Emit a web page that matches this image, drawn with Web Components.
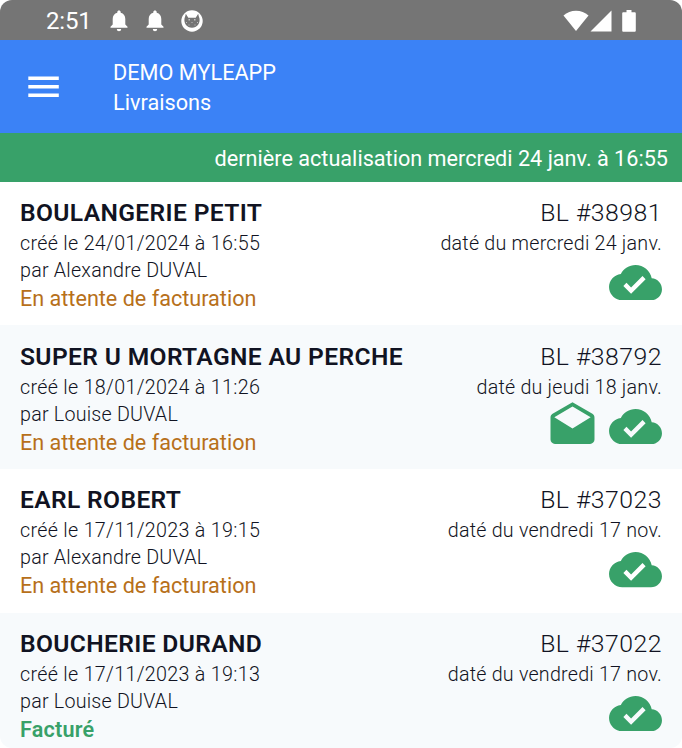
<!DOCTYPE html>
<html lang="fr">
<head>
<meta charset="utf-8">
<title>Livraisons</title>
<style>
body {
	margin:0;
	background:#fff;
	font-family:Roboto,"Liberation Sans",sans-serif;
}
</style>
</head>
<body>
<app-screen>
  <status-bar slot="top" time="2:51"></status-bar>
  <app-header slot="top">
    <span slot="title">DEMO MYLEAPP</span>
    <span slot="subtitle">Livraisons</span>
  </app-header>
  <sync-banner slot="top">dernière actualisation mercredi 24 janv. à 16:55</sync-banner>
  <delivery-list></delivery-list>
</app-screen>

<script>
const deliveries = [
  { client: 'BOULANGERIE PETIT', created: '24/01/2024 à 16:55', author: 'Alexandre DUVAL', status: 'En attente de facturation', number: '38981', date: 'mercredi 24 janv.' },
  { client: 'SUPER U MORTAGNE AU PERCHE', created: '18/01/2024 à 11:26', author: 'Louise DUVAL', status: 'En attente de facturation', number: '38792', date: 'jeudi 18 janv.', mailed: true },
  { client: 'EARL ROBERT', created: '17/11/2023 à 19:15', author: 'Alexandre DUVAL', status: 'En attente de facturation', number: '37023', date: 'vendredi 17 nov.' },
  { client: 'BOUCHERIE DURAND', created: '17/11/2023 à 19:13', author: 'Louise DUVAL', status: 'Facturé', billed: true, number: '37022', date: 'vendredi 17 nov.' },
];

class AppScreen extends HTMLElement {
  constructor() {
    super();
    this.attachShadow({ mode: 'open' }).innerHTML = `
      <style>
        :host {
          display:flex;
          flex-direction:column;
          width:682px;
          height:748px;
          overflow:hidden;
          border-radius:12px;
        }
      </style>
      <slot name="top"></slot>
      <slot></slot>
    `;
  }
}

// Barre système Android
class StatusBar extends HTMLElement {
  constructor() {
    super();
    this.attachShadow({ mode: 'open' });
  }

  connectedCallback() {
    const bell = `<svg class="bell" width="18" height="22" viewBox="0 0 18 22"><path d="M9 .5c1 0 1.7.7 1.7 1.7v.6c2.9.7 4.6 3.1 4.6 6.1v5.7l2.2 2.1v1.1H.5v-1.1l2.2-2.1V8.9c0-3 1.7-5.4 4.6-6.1v-.6C7.3 1.2 8 .5 9 .5zM6.8 19h4.4a2.2 2.2 0 0 1-4.4 0z"/></svg>`;
    this.shadowRoot.innerHTML = `
      <style>
        :host {
          display:flex;
          flex:none;
          justify-content:space-between;
          align-items:center;
          box-sizing:border-box;
          height:39.5px;
          padding:2px 46px 0 46px;
          background:#757575;
          color:#fff;
        }
        .left,.right {
          display:flex;
          align-items:center;
        }
        .time {
          width:64px;
          font-size:24px;
          line-height:28px;
          letter-spacing:-0.2px;
        }
        svg {
          display:block;
          fill:#fff;
        }
        .bell {
          margin-right:18.2px;
        }
        .bell + .bell {
          margin-right:16.8px;
        }
        .right svg + svg {
          margin-left:1.5px;
        }
        .right svg.battery {
          margin-left:10px;
        }
      </style>
      <div class="left">
        <span class="time">${this.getAttribute('time')}</span>
        ${bell}${bell}
        <svg width="22" height="22" viewBox="0 0 22 22">
          <circle cx="11" cy="11" r="10.7"/>
          <path fill="#757575" d="M4.8 3.8l2.5 3.9h7.4l2.5-3.9c.3 1.8.8 3 1.3 4.7.8 4.7-2.3 9.3-7.5 9.3S2.7 13.2 3.5 8.5c.5-1.7 1-2.9 1.3-4.7z"/>
          <path d="M7.5 9H9v1.5H7.5zM13 9h1.5v1.5H13zM5 12h1v1H5zM10.5 12h1v1h-1zM16 12h1v1h-1zM7.5 14.5h1v1h-1zM13.5 14.5h1v1h-1z" opacity=".55"/>
        </svg>
      </div>
      <div class="right">
        <svg width="26" height="22" viewBox="0 0 26 22"><path d="M.5 5.5a18.5 18.5 0 0 1 25 0L13 21z"/></svg>
        <svg width="22" height="22" viewBox="0 0 22 22"><path d="M21.5.5v21H.5z"/></svg>
        <svg class="battery" width="14" height="22" viewBox="0 0 14 22"><path d="M4.5 0h5v2.2h3c.8 0 1.3.5 1.3 1.3v17c0 .8-.5 1.3-1.3 1.3h-11C.7 21.8.2 21.3.2 20.5v-17c0-.8.5-1.3 1.3-1.3h3z"/></svg>
      </div>
    `;
  }
}

class AppHeader extends HTMLElement {
  constructor() {
    super();
    this.attachShadow({ mode: 'open' }).innerHTML = `
      <style>
        :host {
          display:flex;
          flex:none;
          align-items:center;
          box-sizing:border-box;
          height:93px;
          padding-left:28px;
          background:#3b82f6;
          color:#fff;
        }
        svg {
          display:block;
          width:85px;
          height:22px;
          margin-top:2px;
        }
        .titles {
          display:flex;
          flex-direction:column;
          padding-top:3px;
          font-size:21.7px;
          line-height:29.5px;
        }
      </style>
      <svg viewBox="0 0 85 22" fill="#fff"><path d="M.3.5h30.5v3.4H.3zM.3 9.1h30.5v3.4H.3zM.3 17.6h30.5V21H.3z"/></svg>
      <div class="titles">
        <slot name="title"></slot>
        <slot name="subtitle"></slot>
      </div>
    `;
  }
}

// Bandeau vert : date de la dernière synchro
class SyncBanner extends HTMLElement {
  constructor() {
    super();
    this.attachShadow({ mode: 'open' }).innerHTML = `
      <style>
        :host {
          display:flex;
          flex:none;
          justify-content:flex-end;
          align-items:center;
          box-sizing:border-box;
          height:49.3px;
          padding:2px 14px 0 0;
          background:#38a169;
          color:#fff;
          font-size:21.65px;
        }
      </style>
      <span><slot></slot></span>
    `;
  }
}

class DeliveryItem extends HTMLElement {
  constructor() {
    super();
    this.attachShadow({ mode: 'open' });
  }

  set delivery(d) {
    const mail = `<svg width="53" height="44" viewBox="0 0 24 20"><path d="M21.99 8c0-.72-.37-1.35-.94-1.7L12 1 2.95 6.3C2.38 6.65 2 7.28 2 8v10c0 1.1.9 2 2 2h16c1.1 0 2-.9 2-2l-.01-10zM12 13L3.74 7.84 12 3l8.26 4.84L12 13z"/></svg>`;
    const cloud = `<svg width="53" height="35.3" viewBox="0 4 24 16"><path d="M19.35 10.04C18.67 6.59 15.64 4 12 4 9.11 4 6.6 5.64 5.35 8.04 2.34 8.36 0 10.91 0 14c0 3.31 2.69 6 6 6h13c2.76 0 5-2.24 5-5 0-2.64-2.05-4.78-4.65-4.96zM10 17l-3.5-3.5 1.41-1.41L10 14.17 15.18 9l1.41 1.41L10 17z"/></svg>`;
    this.shadowRoot.innerHTML = `
      <style>
        :host {
          display:flex;
          justify-content:space-between;
          box-sizing:border-box;
          height:143.6px;
          padding:15.5px 20px 0;
          color:#111322;
          font-weight:300;
        }
        .col {
          display:flex;
          flex-direction:column;
          white-space:nowrap;
        }
        .end {
          align-items:flex-end;
        }
        .client,.number {
          font-size:24.6px;
          line-height:32px;
          margin-bottom:0.7px;
        }
        .client {
          font-weight:600;
          letter-spacing:0.36px;
        }
        .number {
          font-size:24.8px;
          letter-spacing:0.48px;
        }
        .line {
          font-size:19.7px;
          line-height:27.1px;
          font-weight:350;
          letter-spacing:0.22px;
        }
        .created {
          letter-spacing:0.31px;
        }
        .status {
          font-size:21.6px;
          line-height:29.5px;
          font-weight:400;
          color:#b7701a;
        }
        .status.billed {
          font-weight:600;
          letter-spacing:0.2px;
          color:#38a169;
        }
        .icons {
          display:flex;
          align-items:flex-end;
          gap:10.5px;
          height:44px;
          margin-top:-0.6px;
          fill:#38a169;
        }
        svg {
          display:block;
        }
      </style>
      <div class="col">
        <span class="client">${d.client}</span>
        <span class="line created">créé le ${d.created}</span>
        <span class="line">par ${d.author}</span>
        <span class="status ${d.billed ? 'billed' : ''}">${d.status}</span>
      </div>
      <div class="col end">
        <span class="number">BL #${d.number}</span>
        <span class="line">daté du ${d.date}</span>
        <div class="icons">${d.mailed ? mail : ''}${cloud}</div>
      </div>
    `;
  }
}

class DeliveryList extends HTMLElement {
  constructor() {
    super();
    this.attachShadow({ mode: 'open' });
  }

  connectedCallback() {
    this.shadowRoot.innerHTML = `
      <style>
        :host {
          display:block;
          flex:none;
        }
        delivery-item:nth-of-type(even) {
          background:#f7fafc;
        }
      </style>
    `;
    deliveries.forEach(d => {
      const item = document.createElement('delivery-item');
      item.delivery = d;
      this.shadowRoot.appendChild(item);
    });
  }
}

customElements.define('app-screen', AppScreen);
customElements.define('status-bar', StatusBar);
customElements.define('app-header', AppHeader);
customElements.define('sync-banner', SyncBanner);
customElements.define('delivery-item', DeliveryItem);
customElements.define('delivery-list', DeliveryList);
</script>
</body>
</html>
